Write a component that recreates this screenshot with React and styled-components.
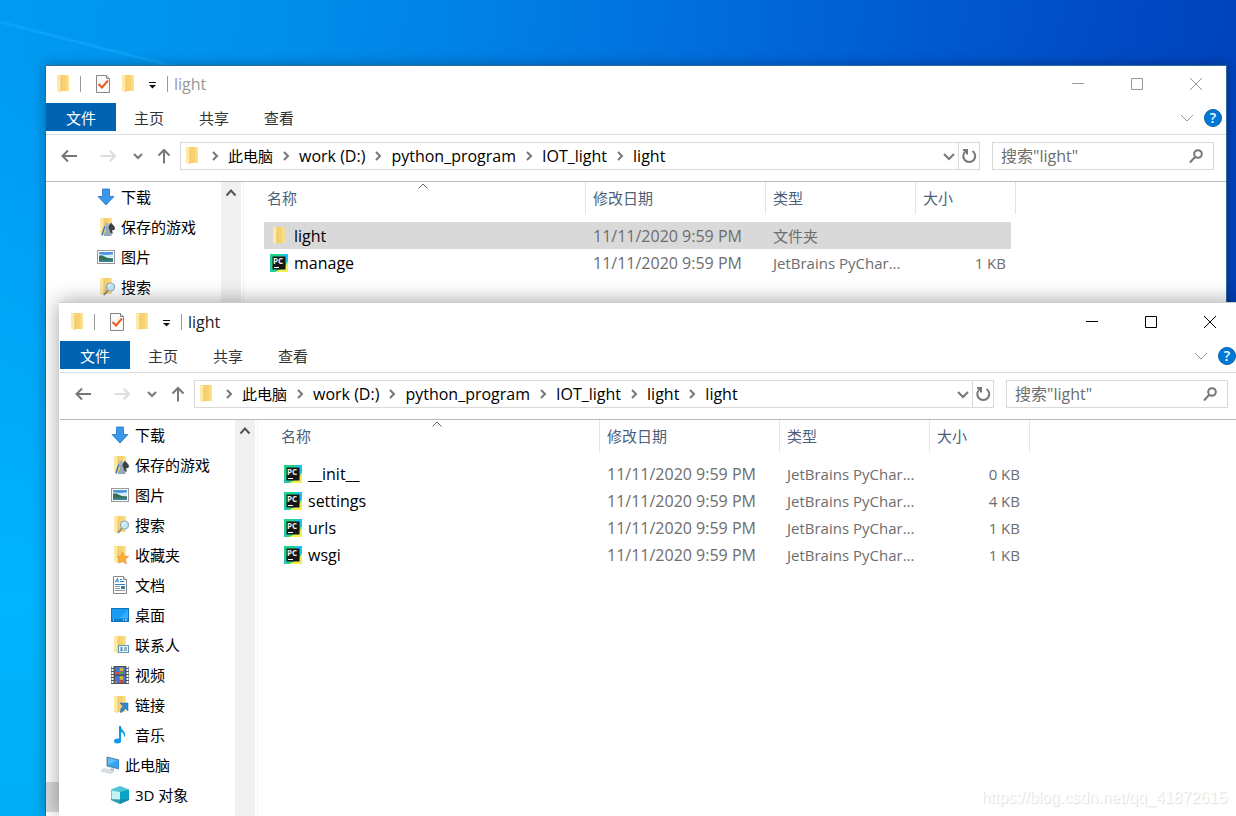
import React from "react";
import styled, { createGlobalStyle } from "styled-components";

const rootFiles = [
  { name: "light", kind: "folder", type: "文件夹", size: "", selected: true },
  { name: "manage", kind: "python", type: "JetBrains PyChar...", size: "1 KB" },
];

const lightFiles = [
  { name: "__init__", kind: "python", type: "JetBrains PyChar...", size: "0 KB" },
  { name: "settings", kind: "python", type: "JetBrains PyChar...", size: "4 KB" },
  { name: "urls", kind: "python", type: "JetBrains PyChar...", size: "1 KB" },
  { name: "wsgi", kind: "python", type: "JetBrains PyChar...", size: "1 KB" },
];

const treeItems = [
  { name: "下载", icon: "download" },
  { name: "保存的游戏", icon: "games" },
  { name: "图片", icon: "picture" },
  { name: "搜索", icon: "search" },
  { name: "收藏夹", icon: "favorites" },
  { name: "文档", icon: "document" },
  { name: "桌面", icon: "desktop" },
  { name: "联系人", icon: "contacts" },
  { name: "视频", icon: "video" },
  { name: "链接", icon: "links" },
  { name: "音乐", icon: "music" },
  { name: "此电脑", icon: "computer", root: true },
  { name: "3D 对象", icon: "objects" },
];

const FolderShape = () => (
  <>
    <path d="M4 0h10.500v9l.5 1v6H6z" fill="#f6d271" />
    <path d="M12 0h2.500v9l.5 1v6h-2.500z" fill="#fbde86" />
    <path d="M3 0h2l2 2v15.500L3 16z" fill="#ffe9a8" />
    <path d="M7 2.500v14" stroke="#e6b958" strokeWidth="0.8" />
  </>
);

const glyphs = {
  folder: <FolderShape />,
  download: (
    <path
      d="M5.500 1h7v7.500H17L9 17 1 8.500h4.500z"
      fill="#3a96e8"
      stroke="#2274bf"
      strokeWidth="0.8"
    />
  ),
  games: (
    <>
      <FolderShape />
      <path d="M14 4.500c1 2 4 3.500 4 5.800 0 1.800-1.800 2.400-3 1.700l.8 3.500h-4l1-3.500c-2 .5-3-.8-2.500-2.500.5-1.500 2.700-3 3.700-5z" fill="#3b4145" />
      <circle cx="10" cy="7" r="2.200" fill="#a5b9c5" />
      <path d="M8.500 9h3l1 4 2 3v2H7v-2l2-3z" fill="#94a9b6" />
      <path d="M8 8.500 6.500 12l-1.500 5.500" stroke="#3e83b5" strokeWidth="1.600" fill="none" />
    </>
  ),
  picture: (
    <>
      <rect x="0.500" y="2.500" width="17" height="13" fill="#fff" stroke="#999" />
      <rect x="2" y="4" width="14" height="10" fill="#9fcff3" />
      <path d="M2 4h14v2L9 7 2 5.500z" fill="#4d94dc" />
      <path d="M6 7h10v3l-5 .5z" fill="#d4edf7" />
      <path d="M2 8c4-1.500 5 1.500 9 2l5 .5V12H2z" fill="#36704f" />
      <path d="M2 12h14v2H2z" fill="#3c7f9b" />
    </>
  ),
  search: (
    <>
      <FolderShape />
      <path d="m11 12-4 5" stroke="#868e94" strokeWidth="2" />
      <circle cx="13.500" cy="9" r="4" fill="#c6e6f7" stroke="#90a9b8" strokeWidth="1.200" />
      <path d="M11.500 8.500a2.500 2.500 0 0 1 2.500-2" stroke="#fff" fill="none" />
    </>
  ),
  favorites: (
    <>
      <FolderShape />
      <path
        d="m11.500 6 1.500 4.300 4.500.2-3.300 2.800 1.300 4.500-4-2.300-3.500 1.500.8-4L6 10.500l4-.3z"
        fill="#ffae3b"
        stroke="#ed8a25"
        strokeWidth="0.700"
      />
    </>
  ),
  document: (
    <>
      <path d="M2.500.5h10L15.500 3.500v14h-13z" fill="#fff" stroke="#888" />
      <path d="M12.500.5v3h3" fill="#eee" stroke="#888" />
      <path d="m4 6.500 2.500-4 1 4M5 5h2M9 3.500h2M9 5.500h4M4 8.500h10" stroke="#2d84c8" fill="none" />
      <path d="M4 10.500h5M4 12.500h5M4 14.500h10" stroke="#8a9aa6" />
      <rect x="10" y="10" width="4" height="3" fill="#397fa5" />
    </>
  ),
  desktop: (
    <>
      <rect x="0.500" y="2.500" width="17" height="13" fill="#1a9bf4" stroke="#1272bb" />
      <path d="m9 12 8-8v8z" fill="#37adff" />
      <path d="M1 14h16" stroke="#095c9e" />
      <path d="M2 14h1M12 14h1M14 14h2" stroke="#fff" />
    </>
  ),
  contacts: (
    <>
      <FolderShape />
      <rect x="7.500" y="9.500" width="10" height="7" fill="#eaf5fb" stroke="#5f9bbd" />
      <path d="M9 11h3v4H9z" fill="#a9cfe2" />
      <circle cx="10.500" cy="12" r="0.800" fill="#3c7198" />
      <path d="M9.500 15c0-2 2-2 2 0z" fill="#3c7198" />
      <path d="M13 12h3M13 14h3" stroke="#3c7198" />
    </>
  ),
  video: (
    <>
      <path d="M0 0h18v18H0z" fill="#4f5356" />
      <path d="M1.500 0v18M16.500 0v18" stroke="#fff" strokeWidth="2" strokeDasharray="2 1" />
      <path d="M4 1h10v7.500H4zM4 10h10v7H4z" fill="#4178d6" />
      <circle cx="10.500" cy="3.500" r="2" fill="#d9b52f" />
      <path d="M4 6h5l2-1 2 2-2 1H4z" fill="#da4a3f" />
      <path d="M8 6h4v2H8z" fill="#5e9e3b" />
      <circle cx="10.500" cy="12" r="2" fill="#d9b52f" />
      <path d="M9 14h3v3H9z" fill="#c94740" />
      <path d="M4 16h2" stroke="#ef7765" />
    </>
  ),
  links: (
    <>
      <FolderShape />
      <path d="M9 7h8v8l-2.500-2.500-4.500 4.500c-1-2-1-4 2-6.500z" fill="#3487cd" stroke="#2269aa" strokeWidth="0.500" />
    </>
  ),
  music: (
    <>
      <path d="M8 0h2c0 4.500 5 4.500 4 10.500h-1c0-3-1.500-4-3-4.500V15H8z" fill="#0c99ec" />
      <ellipse cx="6.500" cy="15" rx="3.500" ry="2.500" fill="#0c99ec" />
    </>
  ),
  computer: (
    <>
      <path d="m6 1 12 3v9L6 10z" fill="#35a3f3" stroke="#4c7287" strokeWidth="0.800" />
      <path d="m7 2 9 2.500L7 9z" fill="#63bcfa" />
      <path d="m10 12 3 .8v2H9z" fill="#b5c2c9" />
      <path d="m3 12.500 10 2.500-3 2.500-10-2.500z" fill="#dce2e6" stroke="#aeb9c0" strokeWidth="0.500" />
    </>
  ),
  objects: (
    <>
      <path d="m9 0 9 3.500-9 4-9-4z" fill="#4fc4d4" />
      <path d="M0 3.500 9 6v12l-9-4z" fill="#62d3de" />
      <path d="m9 6 9-2.500V14l-9 4z" fill="#0aa5c4" />
      <path d="M1 5 9 6v7.500l-8 .5z" fill="#c4f1f3" />
      <path d="m9 13.500 9-.5v1l-9 4-9-4v-1z" fill="#17829a" fillOpacity="0.7" />
    </>
  ),
  python: (
    <>
      <path d="M0 0h18v18H0z" fill="#22d28a" />
      <path d="M11 0h7v9l-5-4z" fill="#17c5ee" />
      <path d="M18 7v11H5l10-5z" fill="#f3ef4e" />
      <path d="M0 10 4 18H0z" fill="#28c8b4" />
      <path d="M2.500 2.500h13v13h-13z" fill="#161616" />
      <path d="M4 13.500h5" stroke="#fff" />
      <text x="3" y="10" fill="#eee" fontSize="8" fontWeight="700">
        PC
      </text>
    </>
  ),
  task: (
    <>
      <path d="M2.500.5h10l3 3v14h-13z" fill="#fafafa" stroke="#858585" />
      <path d="M12.500.5v3h3" fill="#ddd" stroke="#858585" />
      <path d="m4.500 9 3.500 3.500 6-7" fill="none" stroke="#ec5c1c" strokeWidth="2" />
    </>
  ),
  quickMenu: (
    <>
      <path d="M5 7.500h7" stroke="#111" />
      <path d="M5 10h7l-3.500 3.500z" fill="#111" />
    </>
  ),
  back: <path d="M17 9H2.500M8 3.500 2.500 9 8 14.500" />,
  forward: <path d="M1.500 9H16M10.500 3.500 16 9l-5.500 5.500" />,
  up: <path d="M9 16.500V3M3.500 8.500 9 3l5.500 5.500" />,
  chevronDown: <path d="m5 7 4 4 4-4" />,
  chevronRight: <path d="m7 5 4 4-4 4" />,
  chevronUp: <path d="m4.500 12.500 4.500-5 4.500 5" />,
  wideDown: <path d="m4 7 5 5 5-5" />,
  ribbonDown: <path d="m3 6 6 6 6-6" />,
  sort: <path d="M4.500 11.500 9 7l4.500 4.500" />,
  refresh: (
    <>
      <path d="M12.500 4a6 6 0 1 1-6.500 0" />
      <path d="M3 3h4v4.500" />
    </>
  ),
  magnifier: (
    <>
      <circle cx="11" cy="7" r="3.800" />
      <path d="M8.500 9.500 3 15.500" />
    </>
  ),
  minimize: <path d="M3 8.500h12" />,
  maximize: <path d="M3.500 3.500h11v11h-11z" />,
  close: <path d="m3 3 12 12M15 3 3 15" />,
};

const Icon = ({ name, color = "none", weight = 1 }) => (
  <Glyph
    viewBox="0 0 18 18"
    fill="none"
    stroke={color}
    strokeWidth={weight}
    aria-hidden="true"
  >
    {glyphs[name]}
  </Glyph>
);

const FileTable = ({ files }) => (
  <Table>
    <colgroup>
      <col style={{ width: 322 }} />
      <col style={{ width: 180 }} />
      <col style={{ width: 150 }} />
      <col style={{ width: 100 }} />
    </colgroup>
    <thead>
      <tr>
        <HeadCell>
          名称
          <SortMark>
            <Icon name="sort" color="#666" />
          </SortMark>
        </HeadCell>
        <HeadCell>修改日期</HeadCell>
        <HeadCell>类型</HeadCell>
        <HeadCell>大小</HeadCell>
      </tr>
    </thead>
    <tbody>
      {files.map(({ name, kind, type, size, selected }) => (
        <Row key={name} $selected={selected}>
          <NameCell>
            <FileName>
              <Icon name={kind} />
              {name}
            </FileName>
          </NameCell>
          <Cell>11/11/2020 9:59 PM</Cell>
          <TypeCell>{type}</TypeCell>
          <SizeCell>{size}</SizeCell>
        </Row>
      ))}
    </tbody>
  </Table>
);

const Explorer = ({ path, files, tree, active, selectedBelow }) => {
  const captionColor = active ? "#000" : "#999";

  return (
    <Window $active={active}>
      <TitleBar>
        <QuickAccess>
          <Icon name="folder" />
          <Separator />
          <QuickButton aria-label="属性">
            <Icon name="task" />
          </QuickButton>
          <QuickButton aria-label="新建文件夹">
            <Icon name="folder" />
          </QuickButton>
          <QuickButton aria-label="自定义快速访问工具栏">
            <Icon name="quickMenu" />
          </QuickButton>
          <Separator />
        </QuickAccess>
        <Title $active={active}>light</Title>
        <CaptionButton aria-label="最小化">
          <Icon name="minimize" color={captionColor} />
        </CaptionButton>
        <CaptionButton aria-label="最大化">
          <Icon name="maximize" color={captionColor} />
        </CaptionButton>
        <CaptionButton aria-label="关闭">
          <Icon name="close" color={captionColor} />
        </CaptionButton>
      </TitleBar>

      <Ribbon>
        <FileTab>文件</FileTab>
        <Tab>主页</Tab>
        <Tab>共享</Tab>
        <Tab>查看</Tab>
        <RibbonEnd>
          <IconButton aria-label="展开功能区">
            <Icon name="ribbonDown" color="#999" />
          </IconButton>
          <HelpButton aria-label="帮助">?</HelpButton>
        </RibbonEnd>
      </Ribbon>

      <NavBar>
        <NavButton $width={38} aria-label="后退">
          <Icon name="back" color="#777" weight={2} />
        </NavButton>
        <NavButton $width={40} aria-label="前进" disabled>
          <Icon name="forward" color="#ddd" weight={2} />
        </NavButton>
        <NavButton $width={20} aria-label="最近的位置">
          <Icon name="chevronDown" color="#777" weight={2} />
        </NavButton>
        <NavButton $width={32} aria-label="上移">
          <Icon name="up" color="#777" weight={2} />
        </NavButton>
        <Address>
          <Icon name="folder" />
          <Crumbs aria-label="路径">
            {path.map((part, i) => (
              <React.Fragment key={i}>
                <CrumbArrow>
                  <Icon name="chevronRight" color="#777" weight={2} />
                </CrumbArrow>
                <Crumb $cjk={i === 0}>{part}</Crumb>
              </React.Fragment>
            ))}
          </Crumbs>
          <IconButton aria-label="历史记录">
            <Icon name="wideDown" color="#777" weight={2} />
          </IconButton>
          <RefreshButton aria-label="刷新">
            <Icon name="refresh" color="#777" weight={2} />
          </RefreshButton>
        </Address>
        <SearchBox>
          <SearchInput type="text" aria-label="搜索" placeholder={'搜索"light"'} />
          <Icon name="magnifier" color="#777" weight={2} />
        </SearchBox>
      </NavBar>

      <Body>
        <Tree>
          {tree.map(({ name, icon, root }) => (
            <li key={name}>
              <TreeItem $root={root}>
                <Icon name={icon} />
                <TreeLabel>{name}</TreeLabel>
              </TreeItem>
            </li>
          ))}
          {selectedBelow && <SelectedRow />}
        </Tree>
        <ScrollBar>
          <Icon name="chevronUp" color="#555" weight={2} />
        </ScrollBar>
        <Pane>
          <FileTable files={files} />
        </Pane>
      </Body>
    </Window>
  );
};

const App = () => (
  <>
    <GlobalStyle />
    <Desktop>
      <LightRay viewBox="0 0 200 80" aria-hidden="true">
        <path d="M0 22 180 68" stroke="#1fb0ff" strokeOpacity="0.4" strokeWidth="3" />
      </LightRay>
      <Explorer
        path={["此电脑", "work (D:)", "python_program", "IOT_light", "light"]}
        files={rootFiles}
        tree={treeItems.slice(0, 4)}
        selectedBelow
      />
      <Explorer
        path={["此电脑", "work (D:)", "python_program", "IOT_light", "light", "light"]}
        files={lightFiles}
        tree={treeItems}
        active
      />
      <Watermark>https://blog.csdn.net/qq_41872615</Watermark>
    </Desktop>
  </>
);

export default App;

const GlobalStyle = createGlobalStyle`
  * {
    box-sizing: border-box;
  }

  body {
    margin: 0;
    font-family: "Open Sans", "Noto Sans CJK SC", sans-serif;
    font-size: 15px;
    color: #000;
  }

  button,
  input {
    margin: 0;
    padding: 0;
    border: 0;
    background: none;
    color: inherit;
    font: inherit;
  }
`;

const Desktop = styled.main`
  position: relative;
  height: 100vh;
  overflow: hidden;
  background:
    linear-gradient(to bottom, transparent 60px, #00b4fe 600px, #00aef5 100%) left / 60px 100% no-repeat,
    linear-gradient(97deg, #009bf3 0%, #0090ec 20%, #007ae2 42%, #0062d6 62%, #004cc6 82%, #003db6 100%);
`;

const LightRay = styled.svg`
  position: absolute;
  top: 0;
  left: 0;
  width: 200px;
  height: 80px;
`;

const Window = styled.section`
  position: absolute;
  top: ${({ $active }) => ($active ? 302 : 65)}px;
  right: ${({ $active }) => ($active ? -5 : 9)}px;
  bottom: 0;
  left: ${({ $active }) => ($active ? 59 : 45)}px;
  display: flex;
  flex-direction: column;
  overflow: hidden;
  padding-top: ${({ $active }) => ($active ? 1 : 0)}px;
  background: #fff;
  border: 1px solid ${({ $active }) => ($active ? "#fff" : "#2a6b9c")};
  border-top-color: ${({ $active }) => ($active ? "#ccc" : "#2a6b9c")};
  border-bottom: 0;
  box-shadow: 0 0 ${({ $active }) => ($active ? "20px rgba(0, 0, 0, 0.38)" : "12px rgba(0, 0, 0, 0.3)")};
`;

const Glyph = styled.svg`
  display: block;
  flex: none;
  width: 18px;
  height: 18px;
`;

const TitleBar = styled.header`
  display: flex;
  align-items: center;
  height: 37px;
  padding: 0 1px 1px 0;
`;

const QuickAccess = styled.div`
  display: flex;
  align-items: center;
  gap: 7px;
  padding: 0 6px 0 8px;
`;

const Separator = styled.span`
  width: 1px;
  height: 16px;
  background: #999;

  &:nth-child(2) {
    margin: 0 6px 0 1px;
  }

  &:last-child {
    margin-left: -2px;
  }
`;

const QuickButton = styled.button`
  display: block;
`;

const Title = styled.span`
  flex: 1;
  font-size: 16px;
  color: ${({ $active }) => ($active ? "#222" : "#999")};
`;

const CaptionButton = styled.button`
  display: flex;
  justify-content: center;
  align-items: center;
  width: 59px;
  height: 36px;
`;

const Ribbon = styled.div`
  display: flex;
  height: 32px;
  padding-bottom: 3px;
  border-bottom: 1px solid #dcdcdc;
`;

const Tab = styled.button`
  width: 64px;
  height: 28px;
  color: #333;

  & + & {
    margin-left: 1px;
  }
`;

const FileTab = styled(Tab)`
  width: 70px;
  background: #0063b1;
  color: #fff;
`;

const RibbonEnd = styled.div`
  display: flex;
  align-items: center;
  gap: 8px;
  margin-left: auto;
  padding: 2px 4px 0 0;
`;

const IconButton = styled.button`
  display: block;
`;

const HelpButton = styled.button`
  width: 18px;
  height: 18px;
  border: 1px solid #0b5fa5;
  border-radius: 50%;
  background: #0078d7;
  color: #fff;
  font-size: 14px;
  font-weight: 600;
  line-height: 16px;
`;

const NavBar = styled.div`
  display: flex;
  align-items: center;
  height: 47px;
  padding: 0 12px 4px 4px;
  border-bottom: 1px solid #b9b9b9;
`;

const NavButton = styled.button`
  display: flex;
  justify-content: center;
  width: ${({ $width }) => $width}px;
`;

const Address = styled.div`
  display: flex;
  flex: 1;
  align-items: center;
  height: 28px;
  padding-left: 2px;
  border: 1px solid #d9d9d9;
`;

const Crumbs = styled.nav`
  display: flex;
  flex: 1;
  align-items: center;
  padding-left: 1px;
`;

const CrumbArrow = styled.span`
  display: flex;
  justify-content: center;
  width: 26px;
`;

const Crumb = styled.button`
  font-size: ${({ $cjk }) => ($cjk ? 15 : 16)}px;
  line-height: 24px;
  white-space: nowrap;
`;

const RefreshButton = styled.button`
  display: flex;
  justify-content: center;
  align-items: center;
  width: 21px;
  height: 26px;
  border-left: 1px solid #d9d9d9;
`;

const SearchBox = styled.div`
  display: flex;
  align-items: center;
  width: 222px;
  height: 28px;
  margin-left: 12px;
  padding: 0 8px;
  border: 1px solid #d9d9d9;
`;

const SearchInput = styled.input`
  flex: 1;
  min-width: 0;
  font-size: 16px;
  outline: none;

  &::placeholder {
    color: #6d6d6d;
    opacity: 1;
  }
`;

const Body = styled.div`
  display: flex;
  flex: 1;
  min-height: 0;
`;

const Tree = styled.ul`
  display: flex;
  flex-direction: column;
  width: 175px;
  margin: 0;
  padding: 0;
  list-style: none;
`;

const TreeItem = styled.button`
  display: flex;
  align-items: center;
  gap: 6px;
  width: 100%;
  height: 30px;
  padding-left: ${({ $root }) => ($root ? 41 : 51)}px;
  white-space: nowrap;
`;

const TreeLabel = styled.span`
  padding-bottom: 2px;
`;

const SelectedRow = styled.li`
  height: 30px;
  margin-top: auto;
  margin-bottom: 4px;
  background: #d9d9d9;
`;

const ScrollBar = styled.div`
  display: flex;
  justify-content: center;
  width: 20px;
  padding-top: 1px;
  background: #f0f0f0;
`;

const Pane = styled.div`
  flex: 1;
  margin-left: 2px;
  padding-left: 20px;
  border-left: 1px solid #f3f3f3;
`;

const Table = styled.table`
  width: 752px;
  table-layout: fixed;
  border-collapse: separate;
  border-spacing: 0;

  & tbody::before {
    content: "";
    display: block;
    height: 8px;
  }
`;

const HeadCell = styled.th`
  position: relative;
  height: 32px;
  padding: 0 0 2px 7px;
  border-right: 1px solid #e5e5e5;
  color: #4c607a;
  font-weight: 400;
  text-align: left;

  &:first-child {
    padding-left: 3px;
  }
`;

const SortMark = styled.span`
  position: absolute;
  top: -5px;
  left: calc(50% - 11px);
`;

const Cell = styled.td`
  height: 27px;
  padding: 0 0 0 7px;
  color: #6d6d6d;
  font-size: 16px;
  line-height: 26px;
  white-space: nowrap;
`;

const NameCell = styled(Cell)`
  padding-left: 6px;
  color: #000;
`;

const TypeCell = styled(Cell)`
  font-size: 15px;
`;

const SizeCell = styled(Cell)`
  padding-right: 5px;
  border-right: 5px solid transparent;
  background-clip: padding-box;
  font-size: 15px;
  text-align: right;
`;

const Row = styled.tr`
  & > td {
    background-color: ${({ $selected }) => ($selected ? "#d9d9d9" : "transparent")};
  }
`;

const FileName = styled.span`
  display: flex;
  align-items: center;
  gap: 6px;
`;

const Watermark = styled.span`
  position: absolute;
  right: 9px;
  bottom: 9px;
  color: #fff;
  font-family: "Liberation Sans", sans-serif;
  font-size: 16px;
  text-shadow: 1px 1px 1px rgba(0, 0, 0, 0.14);
`;
